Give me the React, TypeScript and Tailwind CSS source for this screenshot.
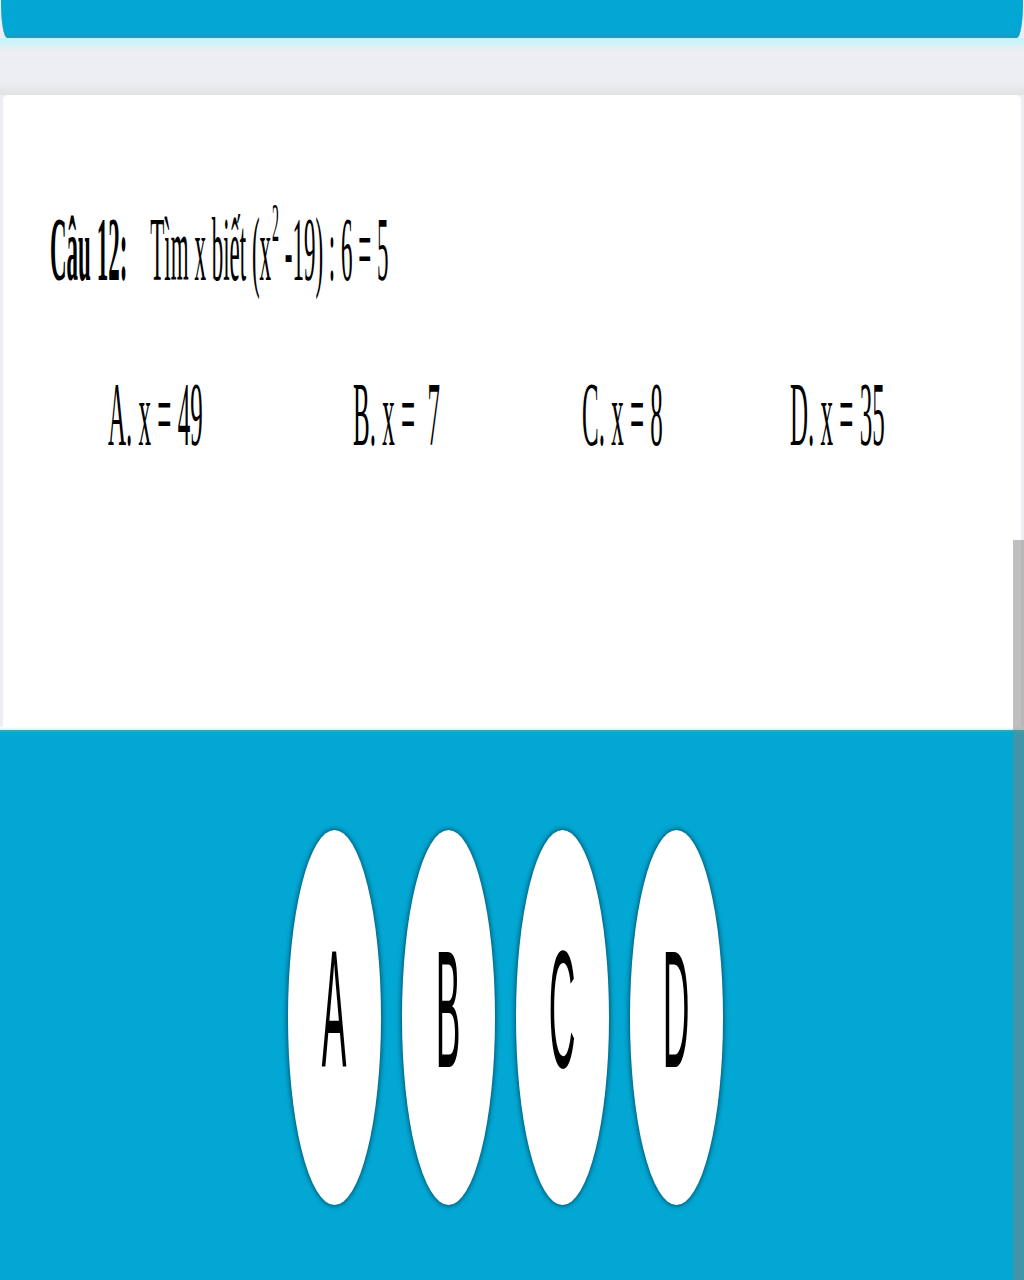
import React from "react";

const serif = "font-['Liberation_Serif','Times_New_Roman',serif]";

function Oval({ letter }: { letter: string }) {
  return (
    <div className="w-[93px] h-[375px] rounded-[50%] bg-white shadow-[0_0_5px_1px_rgba(0,20,40,0.6)] flex items-center justify-center pb-[14px]">
      <span className="font-['Liberation_Sans',Arial,sans-serif] text-[37px] leading-[37px] text-black scale-y-[4.5] inline-block">
        {letter}
      </span>
    </div>
  );
}

export default function App() {
  return (
    <div className="w-[1024px] h-[1280px] bg-[#eceef3] relative overflow-hidden flex flex-col">
      {/* top bar */}
      <div className="h-[38px] bg-[#02a8d3] border-b-[2px] border-[#2a98b0] rounded-bl-[6px_36px] rounded-br-[6px_36px] mx-[1px]" />
      <div className="h-[13px] bg-linear-to-b from-[#bdf7fd] to-[#eceef3]" />
      <div className="h-[31px] bg-[#eceef3]" />
      <div className="h-[13px] bg-linear-to-b from-[#eceef3] to-[#e1e3e3]" />

      {/* white card */}
      <div className="h-[632px] px-[3px]">
        <div className="h-full bg-white rounded-t-[5px] pl-[47px] pt-[110px]">
          <p className={`${serif} text-[23px] leading-[23px] text-black origin-top-left scale-y-[3.95] whitespace-nowrap`}>
            <b>Câu 12:</b>
            <span className="ml-[23px]">
              Tìm x biết (x
              <span className="relative -top-[10px] text-[14px] leading-[0] ml-[1px]">2</span>
              {" "}-19) : 6 = 5
            </span>
          </p>
          <div className={`${serif} mt-[141px] ml-[58px] flex text-[25px] leading-[25px] text-black origin-top-left scale-y-[3.63] whitespace-nowrap`}>
            <span className="w-[245px]">A. x = 49</span>
            <span className="w-[229px]">B. x =&nbsp; 7</span>
            <span className="w-[208px]">C. x = 8</span>
            <span>D. x = 35</span>
          </div>
        </div>
      </div>
      <div className="h-[3px] bg-linear-to-b from-white to-[#c8f5fb]" />
      <div className="h-[2px] bg-[#3aa0b9]" />

      {/* bottom answer area */}
      <div className="flex-1 bg-[#02a8d3] pt-[98px] pr-[14px] flex justify-center items-start gap-[21px]">
        <Oval letter="A" />
        <Oval letter="B" />
        <Oval letter="C" />
        <Oval letter="D" />
      </div>

      {/* scrollbar overlay */}
      <div className="absolute right-0 top-[540px] w-[11px] h-[740px] bg-[rgba(128,128,128,0.5)]" />
    </div>
  );
}
